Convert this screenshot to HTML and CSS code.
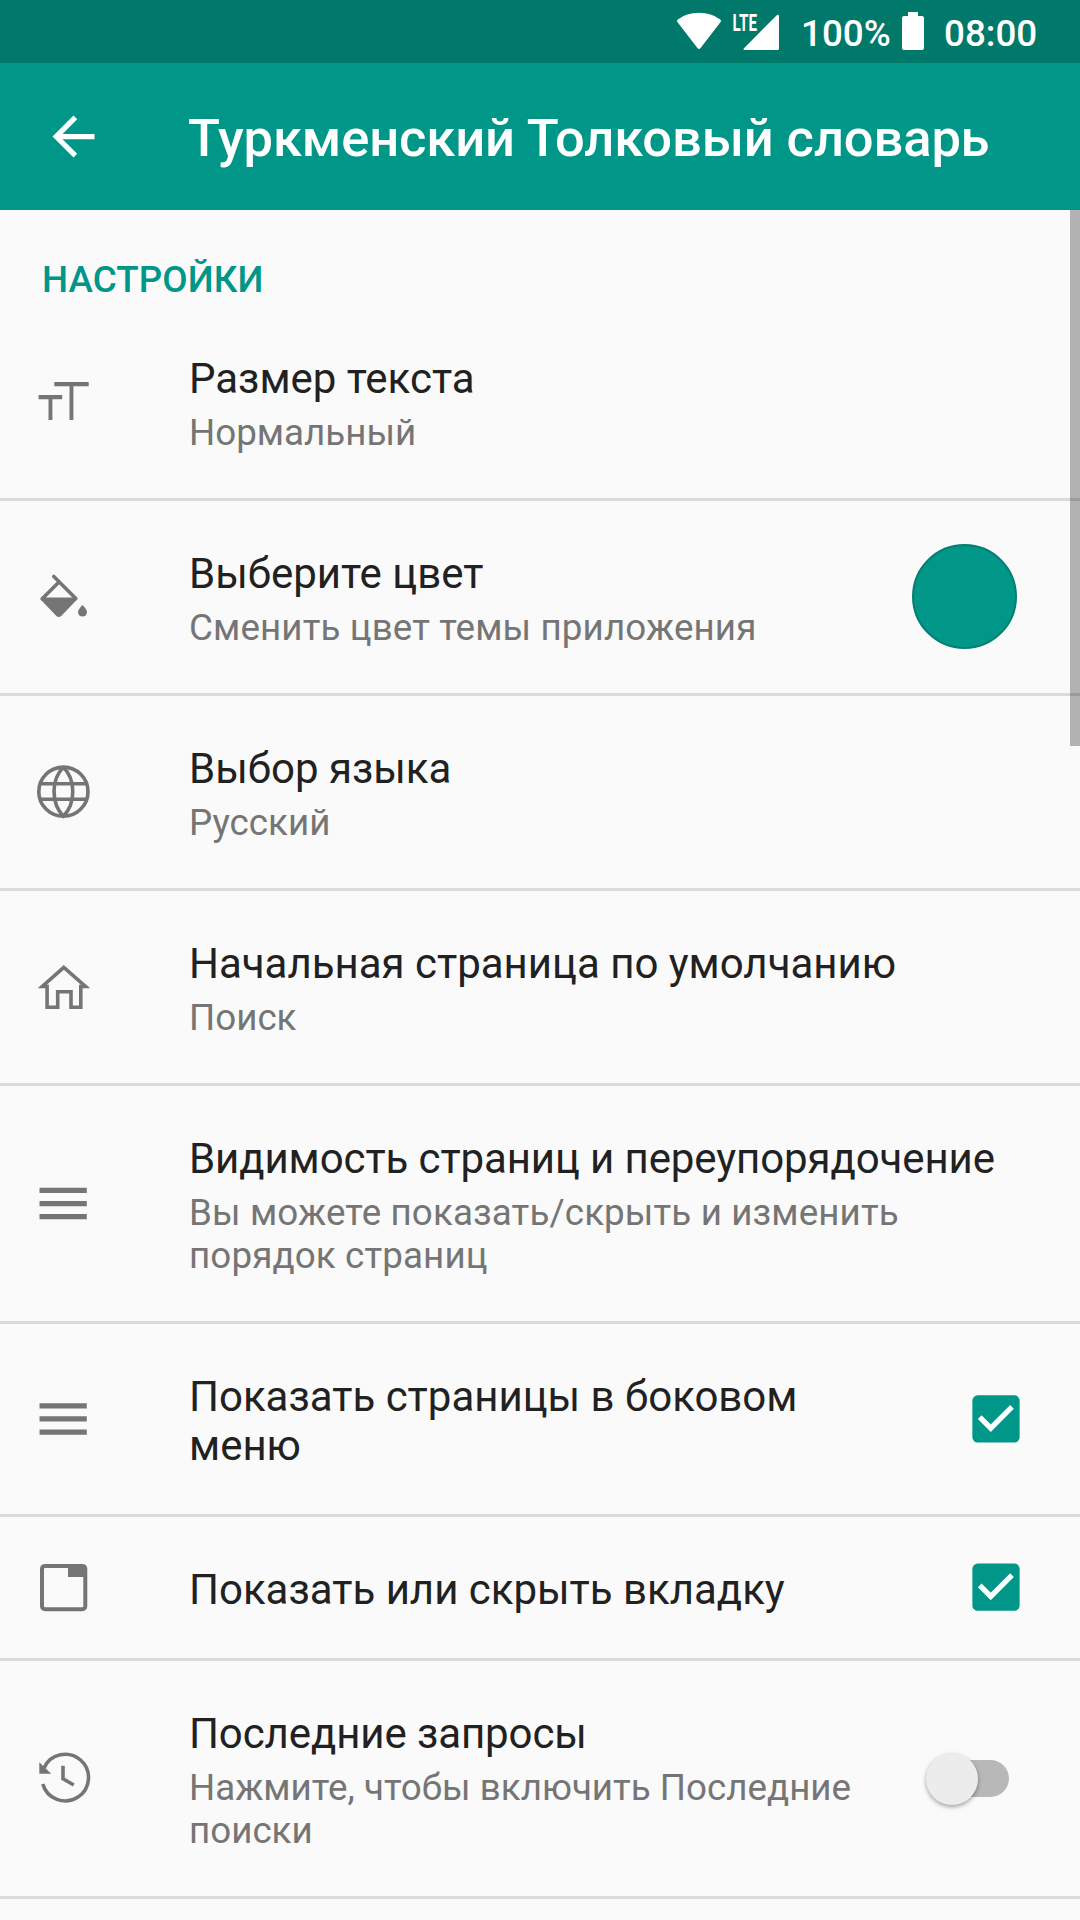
FILE: index.html
```html
<!DOCTYPE html>
<html lang="ru">
<head>
<meta charset="utf-8">
<title>Туркменский Толковый словарь</title>
<link rel="stylesheet" href="styles.css">
</head>
<body>
<div class="status">
  <svg class="status-net" width="104" height="63" viewBox="0 0 104 63">
    <path d="M2.6 22.2Q1 20.8 2.8 19.4Q11.500 12.800 24 12.800T45.200 19.400Q47 20.800 45.400 22.200L25.600 48Q24 49.800 22.400 48Z"/>
    <text class="lte" x="57.500" y="30.500" textLength="24.500" lengthAdjust="spacingAndGlyphs">LTE</text>
    <path d="M104 16V48.500Q104 50 102.500 50H70Q67.500 50 69 48.200L101.500 15.500Q103.500 14 104 16Z"/>
  </svg>
  <span class="status-percent">100%</span>
  <svg class="status-battery" width="22" height="63" viewBox="0 0 22 63">
    <path d="M6 12h10v4h4q2 0 2 2v30q0 2-2 2H2q-2 0-2-2V18q0-2 2-2h4z"/>
  </svg>
  <span class="status-clock">08:00</span>
</div>
<header class="appbar">
  <svg class="back" viewBox="0 0 24 24"><path d="M20 11H7.830l5.590-5.590L12 4l-8 8 8 8 1.410-1.410L7.830 13H20z"/></svg>
  <h1 class="appbar-title">Туркменский Толковый словарь</h1>
</header>
<main class="content">
  <h2 class="section">НАСТРОЙКИ</h2>
  <div class="row">
    <svg class="icon" viewBox="-.5 -.5 63 63"><path d="M22.800 11.500h34.400v4.200H41.900v33.700H38V15.700H22.800zM7.100 24.600h23.600v4.200H20.900v20.600H17V28.800H7.100z"/></svg>
    <div class="text"><div class="title">Размер текста</div><div class="summary">Нормальный</div></div>
  </div>
  <div class="row">
    <svg class="icon" viewBox="-.5 -.5 63 63">
      <path class="line round" d="M22.300 11L44.300 33M27.500 16.500L10.700 33.300"/>
      <path class="solid-round" d="M10.700 33.500L25.800 49.200Q27.300 50.500 28.800 49.200L44 33.500Z"/>
      <path d="M51 39.500s-4.500 4.600-4.500 7.100a4.500 4.500 0 0 0 9 0c0-2.500-4.500-7.100-4.500-7.100z"/>
    </svg>
    <div class="text"><div class="title">Выберите цвет</div><div class="summary loose">Сменить цвет темы приложения</div></div>
    <span class="swatch"></span>
  </div>
  <div class="row">
    <svg class="icon" viewBox="-.5 -.5 63 63"><path class="line" d="M31.900 6.700C19.400 19 19.400 43 31.900 55.700C44.400 43 44.400 19 31.900 6.700M9 23.200H55M9 38.800H55"/><circle class="line" cx="31.900" cy="31.200" r="24.600"/></svg>
    <div class="text"><div class="title">Выбор языка</div><div class="summary">Русский</div></div>
  </div>
  <div class="row">
    <svg class="icon" viewBox="-.5 -.5 63 63"><path class="line" d="M32.300 11.900L10.800 31H15.600V51.700H26.200V36.200H39.500V51.700H49.300V31H54Z"/></svg>
    <div class="text"><div class="title">Начальная страница по умолчанию</div><div class="summary">Поиск</div></div>
  </div>
  <div class="row">
    <svg class="icon" viewBox="-.250 0 24 24"><path d="M3 18h18v-2H3v2zm0-5h18v-2H3v2zm0-7v2h18V6H3z"/></svg>
    <div class="text"><div class="title tight">Видимость страниц и переупорядочение</div><div class="summary loose">Вы можете показать/скрыть и изменить<br>порядок страниц</div></div>
  </div>
  <div class="row">
    <svg class="icon" viewBox="-.250 -.190 24 24"><path d="M3 18h18v-2H3v2zm0-5h18v-2H3v2zm0-7v2h18V6H3z"/></svg>
    <div class="text"><div class="title">Показать страницы в боковом<br>меню</div></div>
    <svg class="checkbox" viewBox="-.190 -.190 24 24"><rect class="box" x="3" y="3" width="18" height="18" rx="2"/><path class="tick" d="M5.800 11.300L10 15.500L18.100 7.400"/></svg>
  </div>
  <div class="row">
    <svg class="icon" viewBox="-.5 0 63 63"><rect class="line frame" x="10.500" y="9.900" width="43.300" height="43.300" rx="3"/><path d="M36.500 10h17.500v11H36.500z"/></svg>
    <div class="text"><div class="title">Показать или скрыть вкладку</div></div>
    <svg class="checkbox" viewBox="-.190 .100 24 24"><rect class="box" x="3" y="3" width="18" height="18" rx="2"/><path class="tick" d="M5.800 11.300L10 15.500L18.100 7.400"/></svg>
  </div>
  <div class="row">
    <svg class="icon" viewBox="-.5 0 63 63"><path class="line" d="M12.500 21A23.300 23.300 0 1 1 11.300 36.900M31.500 18.700V31.800L42.300 38"/><path d="M7.800 15.200V26.800H19.700Z"/></svg>
    <div class="text"><div class="title tight">Последние запросы</div><div class="summary">Нажмите, чтобы включить Последние<br>поиски</div></div>
    <span class="switch"><span class="thumb"></span></span>
  </div>
  <div class="scrollbar"></div>
</main>
</body>
</html>
```
FILE: styles.css
```css
* { box-sizing: border-box; }
body {
  margin: 0;
  width: 1080px;
  height: 1920px;
  overflow: hidden;
  display: flex;
  flex-direction: column;
  background: #fafafa;
  font-family: Roboto, "Noto Sans", sans-serif;
}
.status {
  flex: none;
  height: 63px;
  display: flex;
  align-items: center;
  justify-content: flex-end;
  padding-right: 41px;
  background: #00796b;
  color: #fff;
  font-size: 36.75px;
  font-weight: 500;
  line-height: 63px;
}
.status svg { fill: #fff; }
.status-net { margin-right: 22px; }
.status-percent { width: 88px; margin-right: 13px; padding-top: 4px; white-space: nowrap; }
.status-battery { margin-right: 20px; }
.status-clock { width: 95px; padding-top: 4px; white-space: nowrap; }
.lte { font-size: 24px; font-weight: 700; }
.appbar {
  flex: none;
  height: 147px;
  display: flex;
  align-items: center;
  padding-left: 42px;
  background: #009688;
  color: #fff;
}
.back { width: 63px; height: 63px; margin-right: 83px; fill: #fff; }
.appbar-title { margin: 0; padding-top: 2px; font-size: 52.5px; font-weight: 500; line-height: 62px; letter-spacing: -.11px; white-space: nowrap; }
.content { position: relative; flex: 1; }
.section {
  margin: 0;
  height: 96px;
  padding: 48px 42px 0;
  color: #009688;
  font-size: 36.75px;
  font-weight: 500;
  line-height: 43px;
  letter-spacing: .1px;
}
.row {
  display: flex;
  align-items: center;
  padding-left: 31px;
  border-bottom: 3px solid #dadada;
}
.icon { flex: none; width: 63px; height: 63px; margin: 0 95px 1px 0; fill: #757575; }
.line { fill: none; stroke: #757575; stroke-width: 3.6; }
.round { stroke-linecap: round; }
.frame { stroke-width: 4; }
.solid-round { stroke: #757575; stroke-width: 3.2; stroke-linejoin: round; }
.text { flex: 1; min-width: 0; padding: 48px 0 44px; white-space: nowrap; }
.title { color: #212121; font-size: 42px; line-height: 49px; letter-spacing: -.01px; }
.summary { margin-top: 8px; color: #757575; font-size: 36.75px; line-height: 43px; }
.tight { letter-spacing: -.1px; }
.loose { letter-spacing: .12px; }
.swatch {
  flex: none;
  width: 105px;
  height: 105px;
  margin: 0 63px 1px 0;
  border: 2px solid #007f72;
  border-radius: 50%;
  background: #009688;
}
.checkbox { flex: none; width: 63px; height: 63px; margin: 0 53px 1px 0; }
.box { fill: #009688; }
.tick { fill: none; stroke: #fff; stroke-width: 2; }
.switch {
  flex: none;
  display: flex;
  align-items: center;
  width: 76px;
  height: 37px;
  margin-right: 71px;
  border-radius: 19px;
  background: #b8b8b8;
}
.thumb {
  flex: none;
  width: 52px;
  height: 52px;
  margin-left: -7px;
  border-radius: 50%;
  background: #ececec;
  box-shadow: 0 2px 4px rgba(0, 0, 0, .35);
}
.scrollbar {
  position: absolute;
  top: 0;
  right: 0;
  width: 10px;
  height: 536px;
  background: rgba(0, 0, 0, .285);
}
```
